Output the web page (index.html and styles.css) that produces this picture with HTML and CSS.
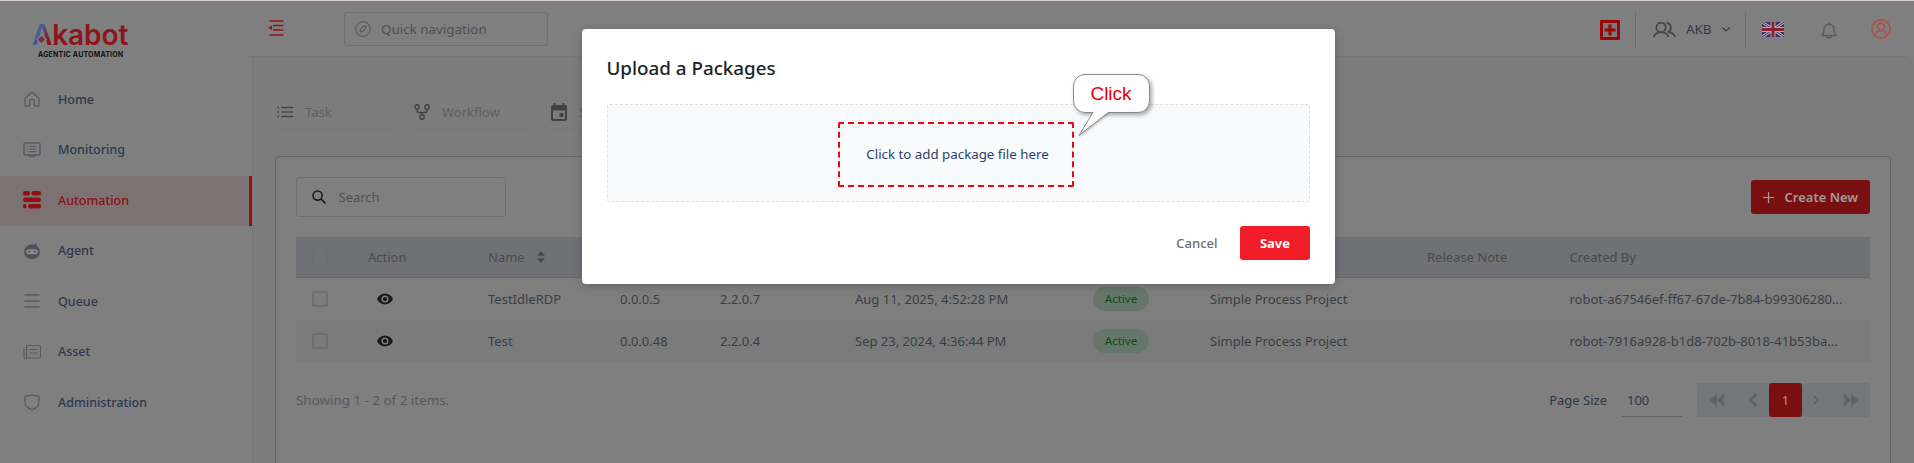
FILE: index.html
```html
<!DOCTYPE html>
<html lang="en">
<head>
<meta charset="utf-8">
<title>Packages</title>
<link rel="stylesheet" href="styles.css">
</head>
<body>
<div class="topline"></div>
<div class="app">
  <aside class="sidebar">
    <div class="brand">
      <div class="logo"><span class="logo-a">A</span>kabot</div>
      <div class="tagline">AGENTIC AUTOMATION</div>
    </div>
    <nav class="nav">
      <a class="nav-item"><svg class="nav-icon" viewBox="0 0 18 18"><path d="M2 8.200 9 2l7 6.200V16h-4.600v-4.500a2.400 2.400 0 0 0-4.800 0V16H2z" fill="none" stroke="#565c63" stroke-width="1.300" stroke-linejoin="round"/></svg><span>Home</span></a>
      <a class="nav-item"><svg class="nav-icon" viewBox="0 0 18 18"><rect x="1" y="2" width="16" height="12" rx="1.500" fill="none" stroke="#565c63" stroke-width="1.500"/><path d="M4 5.500h1M4 8h1M4 10.500h1M6.500 5.500h7M6.500 8h7M6.500 10.500h7" stroke="#565c63" stroke-width="1.100"/><path d="M6 15.500h6" stroke="#565c63" stroke-width="1.600"/></svg><span>Monitoring</span></a>
      <a class="nav-item active"><svg class="nav-icon" viewBox="0 0 18 18"><g fill="#8f0f14"><rect x="0" y="0" width="7" height="4.500" rx="2"/><rect x="8.500" y="0" width="9.500" height="4.500" rx="2"/><rect x="0" y="6.500" width="18" height="4.500" rx="2"/><rect x="0" y="13" width="3.500" height="4.500" rx="1.700"/><rect x="5" y="13" width="13" height="4.500" rx="2"/></g></svg><span>Automation</span></a>
      <a class="nav-item"><svg class="nav-icon" viewBox="0 0 18 18"><path d="M12 2.800 13.300.8l.3 3A7.500 7.500 0 0 1 16.800 10c0 4.200-3.400 7-7.800 7s-7.800-2.800-7.800-7a7.800 7.800 0 0 1 10.800-7.200z" fill="#4e5358"/><rect x="3.200" y="7.200" width="11.600" height="5" rx="2.500" fill="#8b8d90"/><circle cx="6.300" cy="9.700" r="1.100" fill="#4e5358"/><circle cx="11.700" cy="9.700" r="1.100" fill="#4e5358"/></svg><span>Agent</span></a>
      <a class="nav-item"><svg class="nav-icon" viewBox="0 0 18 18"><path d="M1.500 3h15M1.500 9h15M1.500 15h15" stroke="#565c63" stroke-width="1.300"/></svg><span>Queue</span></a>
      <a class="nav-item"><svg class="nav-icon" viewBox="0 0 18 18"><rect x="3.500" y="2.500" width="14" height="12.500" rx="1" fill="none" stroke="#565c63" stroke-width="1.200"/><path d="M6.500 6.500h8M6.500 10h8" stroke="#565c63" stroke-width="1.200"/><path d="M1 5v9.500A1 1 0 0 0 2 15.500h2" fill="none" stroke="#565c63" stroke-width="1.200"/></svg><span>Asset</span></a>
      <a class="nav-item"><svg class="nav-icon" viewBox="0 0 18 18"><path d="M2 3c2.300 0 4.500-.4 7-1.200 2.500.8 4.700 1.200 7 1.200v6.500c0 3.500-3 5.900-7 7.200-4-1.300-7-3.700-7-7.200z" fill="none" stroke="#565c63" stroke-width="1.300" stroke-linejoin="round"/></svg><span>Administration</span></a>
    </nav>
  </aside>

  <div class="main">
    <header class="topbar">
      <svg class="menu-icon" viewBox="0 0 16 16"><path d="M1.500 1h14M5 5.500h10.500M5 10h10.500M1.500 15h14" stroke="#95131a" stroke-width="1.400"/><path d="M0 7.800 4 5.600v4.400z" fill="#95131a"/></svg>
      <div class="quick-nav">
        <svg class="compass" viewBox="0 0 16 16"><circle cx="8" cy="8" r="7.400" fill="none" stroke="#4f5358" stroke-width="1"/><path d="M11.200 4.800 9.400 9.400 4.800 11.200 6.600 6.600z" fill="none" stroke="#4f5358" stroke-width="1"/></svg>
        <span>Quick navigation</span>
      </div>
      <div class="tools">
        <svg class="tool-plus" viewBox="0 0 20 20"><rect x="0" y="0" width="20" height="20" rx="1" fill="#9b0606"/><rect x="3" y="3" width="14" height="14" fill="#7a7a7a"/><path d="M10 4.500v11M4.500 10h11" stroke="#9b0606" stroke-width="3.200"/></svg>
        <span class="divider"></span>
        <svg class="tool-users" viewBox="0 0 23 15"><circle cx="8" cy="5.500" r="4.700" fill="none" stroke="#45494d" stroke-width="1.800"/><path d="M.8 15C1.500 11.800 4 10.300 8 10.300s6.500 1.500 7.200 4.700" fill="none" stroke="#45494d" stroke-width="1.800"/><path d="M13.500 1a4.700 4.700 0 0 1 1.500 9c3.300.3 6 1.600 7.200 5" fill="none" stroke="#45494d" stroke-width="1.800"/></svg>
        <span class="tool-name">AKB</span>
        <svg class="tool-chevron" viewBox="0 0 8 5"><path d="M.5.500 4 4 7.500.500" fill="none" stroke="#2f3a52" stroke-width="1.100"/></svg>
        <span class="divider second"></span>
        <svg class="tool-flag" viewBox="0 0 22 15"><rect width="22" height="15" fill="#2c3a72"/><path d="M0 0 22 15M22 0 0 15" stroke="#a9a9b2" stroke-width="3"/><path d="M0 0 22 15M22 0 0 15" stroke="#8a2030" stroke-width="1"/><path d="M11 0v15M0 7.500h22" stroke="#a9a9b2" stroke-width="5"/><path d="M11 0v15M0 7.500h22" stroke="#8a2030" stroke-width="3"/></svg>
        <svg class="tool-bell" viewBox="0 0 16 17"><path d="M1 13.500c1.300-1.300 1.800-2.600 1.800-5.200C2.800 4.600 5 2.300 8 2.300s5.200 2.300 5.200 6c0 2.600.5 3.900 1.800 5.200z" fill="none" stroke="#565c63" stroke-width="1.400" stroke-linejoin="round"/><path d="M8 .500v1.800M6 14a2 2 0 0 0 4 0" fill="none" stroke="#565c63" stroke-width="1.400"/></svg>
        <svg class="tool-avatar" viewBox="0 0 20 20"><circle cx="10" cy="10" r="9.100" fill="none" stroke="#ad5547" stroke-width="1.700"/><circle cx="10" cy="7.600" r="3.400" fill="none" stroke="#ad5547" stroke-width="1.700"/><path d="M3.800 16.500c.6-3 3-4.500 6.200-4.500s5.600 1.500 6.200 4.500" fill="none" stroke="#ad5547" stroke-width="1.700"/></svg>
      </div>
    </header>

    <section class="content">
      <div class="tabs">
        <div class="tab"><svg class="tab-icon" viewBox="0 0 16 12"><path d="M4 1.500h12M4 6h12M4 10.500h12" stroke="#45494d" stroke-width="1.700"/><path d="M0 1.500h2M0 6h2M0 10.500h2" stroke="#45494d" stroke-width="1.700"/></svg><span>Task</span></div>
        <div class="tab"><svg class="tab-icon flow" viewBox="0 0 16 16"><circle cx="3" cy="3" r="2.200" fill="none" stroke="#3f4347" stroke-width="1.400"/><circle cx="13" cy="3" r="2.200" fill="none" stroke="#3f4347" stroke-width="1.400"/><circle cx="8" cy="13" r="2.200" fill="none" stroke="#3f4347" stroke-width="1.400"/><path d="M3 5.200V6.500A2 2 0 0 0 5 8.500h6a2 2 0 0 0 2-2V5.200M8 8.500v2.300" fill="none" stroke="#3f4347" stroke-width="1.400"/></svg><span>Workflow</span></div>
        <div class="tab"><svg class="tab-icon cal" viewBox="0 0 16 18"><path d="M3.500 0v3M12.500 0v3" stroke="#3f4347" stroke-width="2"/><path d="M2 2h12a2 2 0 0 1 2 2v12a2 2 0 0 1-2 2H2a2 2 0 0 1-2-2V4a2 2 0 0 1 2-2zm0 5.500V16h12V7.500z" fill="#3f4347" fill-rule="evenodd"/><rect x="8.500" y="10" width="4" height="4" fill="#3f4347"/></svg><span>Schedule</span></div>
      </div>

      <div class="card">
        <div class="toolbar">
          <div class="search">
            <svg class="search-icon" viewBox="0 0 14 14"><circle cx="5.600" cy="5.600" r="4.600" fill="none" stroke="#16191c" stroke-width="1.500"/><path d="M9 9l4.500 4.500" stroke="#16191c" stroke-width="1.600"/></svg>
            <span>Search</span>
          </div>
          <button class="create"><svg class="create-plus" viewBox="0 0 11 11"><path d="M5.500 0v11M0 5.500h11" stroke="#a09a9a" stroke-width="1.200"/></svg><span>Create New</span></button>
        </div>

        <div class="table">
          <div class="row head">
            <div class="cell"><span class="check"></span></div>
            <div class="cell">Action</div>
            <div class="cell">Name<svg class="sort" viewBox="0 0 8 12"><path d="M4 0 8 4.800H0zM4 12 0 7.200h8z" fill="#4a4a4a"/></svg></div>
            <div class="cell">Version</div>
            <div class="cell">Core</div>
            <div class="cell">Created Date</div>
            <div class="cell">Status</div>
            <div class="cell">Type</div>
            <div class="cell">Release Note</div>
            <div class="cell">Created By</div>
          </div>
          <div class="row">
            <div class="cell"><span class="check"></span></div>
            <div class="cell"><svg class="eye" viewBox="0 0 16 12"><path d="M8 .500C4.500.500 1.500 2.600 0 6c1.500 3.400 4.500 5.500 8 5.500s6.500-2.100 8-5.500C14.500 2.600 11.500.500 8 .500z" fill="#18191a"/><circle cx="8" cy="6" r="3.600" fill="#7e7e7e"/><circle cx="8" cy="6" r="2.100" fill="#18191a"/></svg></div>
            <div class="cell">TestIdleRDP</div>
            <div class="cell">0.0.0.5</div>
            <div class="cell">2.2.0.7</div>
            <div class="cell">Aug 11, 2025, 4:52:28 PM</div>
            <div class="cell"><span class="pill">Active</span></div>
            <div class="cell">Simple Process Project</div>
            <div class="cell"></div>
            <div class="cell">robot-a67546ef-ff67-67de-7b84-b99306280...</div>
          </div>
          <div class="row even">
            <div class="cell"><span class="check"></span></div>
            <div class="cell"><svg class="eye" viewBox="0 0 16 12"><path d="M8 .500C4.500.500 1.500 2.600 0 6c1.500 3.400 4.500 5.500 8 5.500s6.500-2.100 8-5.500C14.500 2.600 11.500.500 8 .500z" fill="#18191a"/><circle cx="8" cy="6" r="3.600" fill="#7c7c7c"/><circle cx="8" cy="6" r="2.100" fill="#18191a"/></svg></div>
            <div class="cell">Test</div>
            <div class="cell">0.0.0.48</div>
            <div class="cell">2.2.0.4</div>
            <div class="cell">Sep 23, 2024, 4:36:44 PM</div>
            <div class="cell"><span class="pill">Active</span></div>
            <div class="cell">Simple Process Project</div>
            <div class="cell"></div>
            <div class="cell">robot-7916a928-b1d8-702b-8018-41b53ba...</div>
          </div>
        </div>

        <div class="footer">
          <span class="showing">Showing 1 - 2 of 2 items.</span>
          <div class="page-size"><span class="ps-label">Page Size</span><span class="ps-value">100</span></div>
          <div class="pager">
            <svg class="pg first" viewBox="0 0 14 14"><path d="M7 0v14L0 7zM14 0v14L7 7z" fill="#5f6367"/></svg>
            <svg class="pg prev" viewBox="0 0 10 14"><path d="M8.500 1 2 7l6.500 6" fill="none" stroke="#5f6367" stroke-width="2.600"/></svg>
            <span class="pg-current">1</span>
            <svg class="pg next" viewBox="0 0 7 10"><path d="M1 1l4.500 4L1 9" fill="none" stroke="#5f6367" stroke-width="1.800"/></svg>
            <svg class="pg last" viewBox="0 0 14 14"><path d="M0 0v14l7-7zM7 0v14l7-7z" fill="#5f6367"/></svg>
          </div>
        </div>
      </div>
    </section>
  </div>
</div>

<div class="modal">
  <h2 class="modal-title">Upload a Packages</h2>
  <div class="dropzone">
    <div class="drop-target">Click to add package file here</div>
  </div>
  <div class="modal-actions">
    <button class="cancel">Cancel</button>
    <button class="save">Save</button>
  </div>
</div>

<div class="callout">
  <span>Click</span>
  <svg class="callout-tail" viewBox="0 0 32 26"><path d="M15 .500 1 23.500 30 .500" fill="#fff" stroke="#8a8a8a" stroke-width="1"/><path d="M15.500 0h14v1.200h-14z" fill="#fff"/></svg>
</div>
```

FILE: styles.css
```css
* { box-sizing: border-box; }
html, body { margin: 0; height: 100%; }
body {
  position: relative;
  height: 463px;
  overflow: hidden;
  background: #7f7f7f;
  color: #3a3e44;
  font-family: "Noto Sans", "Liberation Sans", sans-serif;
  font-size: 13px;
}
.topline {
  position: absolute;
  top: 0; left: 0; right: 0;
  height: 1px;
  background: #dccfcf;
}
.app { display: flex; height: 463px; }

/* sidebar */
.sidebar { width: 252px; flex: none; }
.brand { height: 74.500px; padding: 19px 0 0 32px; }
.logo {
  font-family: "Inter", sans-serif;
  font-size: 28px;
  font-weight: 600;
  line-height: 32px;
  letter-spacing: -.1px;
  color: #8f141a;
}
.logo-a {
  position: relative;
  display: inline-block;
  background: linear-gradient(100deg, #2d4f98 0%, #4a5d9a 45%, #8f141a 78%);
  -webkit-background-clip: text;
  background-clip: text;
  color: transparent;
}
.logo-a::after {
  content: "";
  position: absolute;
  left: 7px;
  top: 18px;
  width: 5px;
  height: 5px;
  background: #7a2a50;
  box-shadow: 0 0 0 1.500px #7f7f7f;
  transform: rotate(45deg);
}
.tagline {
  font-family: "Inter", sans-serif;
  font-size: 7px;
  font-weight: 700;
  line-height: 8px;
  margin: 0 0 0 6px;
  letter-spacing: .2px;
  color: #111;
  white-space: nowrap;
}
.nav-item {
  display: flex;
  align-items: center;
  height: 50.500px;
  padding: 0 0 1px 22.500px;
  font-size: 12.500px;
  font-weight: 500;
  color: #2c3850;
}
.nav-icon { width: 18px; height: 18px; margin-right: 17.500px; flex: none; }
.nav-item.active {
  background: #7c7272;
  border-right: 3px solid #94101a;
  color: #8c1016;
}

/* top bar */
.main { flex: 1; min-width: 0; }
.topbar {
  display: flex;
  align-items: center;
  height: 57px;
  margin: 0 6px 0 -4px;
  padding: 0 17px 0 19.500px;
  border-bottom: 1px solid #777;
}
.menu-icon { width: 16px; height: 16px; flex: none; margin-top: -1px; }
.quick-nav {
  display: flex;
  align-items: center;
  width: 204px;
  height: 34px;
  margin: 1px 0 0 60.500px;
  padding-left: 10px;
  border: 1px solid #6f6f6f;
  border-radius: 3px;
  color: #4c5258;
  font-size: 13.400px;
}
.compass { width: 16px; height: 16px; margin-right: 10px; }
.tools { display: flex; align-items: center; margin-left: auto; }
.tool-plus { width: 20px; height: 20px; margin-top: 3px; }
.divider { width: 1px; height: 38px; margin: 4px 0 0 15px; background: #6e6e6e; }
.tool-users { width: 23px; height: 15px; margin: 2px 0 0 17px; }
.tool-name { margin-left: 10px; color: #2f3a52; margin-top: 2px; width: 25px; font-size: 13.400px; }
.tool-chevron { width: 8px; height: 5px; margin: 3px 0 0 10.500px; }
.divider.second { margin-left: 15.500px; }
.tool-flag { width: 22px; height: 15px; margin: 2px 0 0 16px; }
.tool-bell { width: 16px; height: 17px; margin: 4px 0 0 37px; }
.tool-avatar { width: 20px; height: 20px; margin: 2px 0 0 34px; }

/* content */
.content {
  height: 406px;
  padding: 38px 23px 0 23px;
  border-left: 1px solid #767676;
  background: #7c7c7c;
}
.tabs { display: flex; gap: 17px; margin-left: -1px; }
.tab {
  display: flex;
  align-items: center;
  width: 120px;
  height: 35px;
  padding-left: 2px;
  border-bottom: 1px solid #787878;
  color: #5b6067;
}
.tab-icon { width: 16px; height: 12px; margin-right: 12px; flex: none; }
.tab-icon.flow { height: 16px; }
.tab-icon.cal { height: 18px; }

.card {
  height: 320px;
  margin-top: 26px;
  margin-left: -1px;
  padding: 20px;
  background: #7f7f7f;
  border: 1px solid #666;
  border-radius: 4px;
}
.toolbar { display: flex; align-items: center; justify-content: space-between; height: 40px; }
.search {
  display: flex;
  align-items: center;
  width: 210px;
  height: 40px;
  padding-left: 15px;
  border: 1px solid #6e6e6e;
  border-radius: 3px;
  color: #4c5258;
}
.search-icon { width: 14px; height: 14px; margin-right: 12.500px; }
.create {
  display: flex;
  align-items: center;
  width: 119px;
  height: 34px;
  padding: 0 0 0 12px;
  border: 0;
  border-radius: 3px;
  background: #7a0f12;
  color: #a09a9a;
  font: 600 13px "Noto Sans", sans-serif;
}
.create-plus { width: 11px; height: 11px; margin-right: 10.500px; }

.table { margin-top: 20px; }
.row {
  display: grid;
  grid-template-columns: 72px 120px 132px 100px 135px 238px 117px 217px 142.500px 1fr;
  align-items: center;
  height: 42px;
  background: #7e7e7e;
}
.row.even { background: #7b7b7b; }
.row.head {
  height: 40.500px;
  background: #6f7174;
  border-bottom: 1px solid #65686c;
  color: #4a4a4a;
}
.cell { display: flex; align-items: center; white-space: nowrap; overflow: hidden; }
.check {
  width: 16px;
  height: 16px;
  margin-left: 16px;
  border: 2px solid #6b6e72;
  border-radius: 2px;
}
.sort { width: 8px; height: 12px; margin-left: 12px; }
.eye { width: 16px; height: 12px; margin-left: 8.500px; }
.pill {
  display: flex;
  align-items: center;
  justify-content: center;
  width: 56px;
  height: 24px;
  border-radius: 12px;
  background: #66766a;
  color: #0f4a20;
  font-size: 11.500px;
}

.footer { display: flex; align-items: center; height: 34px; margin-top: 21px; }
.showing { color: #565a60; font-size: 13.400px; }
.page-size { display: flex; align-items: center; margin-left: auto; color: #2c3648; }
.ps-value {
  width: 60px;
  height: 34px;
  margin: 0 15px;
  padding: 8px 0 0 5px;
  border-bottom: 1px solid #666;
}
.pager {
  display: flex;
  align-items: center;
  width: 173px;
  height: 34px;
  border-radius: 3px;
  background: #74767a;
}
.pg { flex: none; }
.pg.first { width: 14px; height: 14px; margin-left: 13px; }
.pg.prev { width: 10px; height: 14px; margin-left: 24px; }
.pg-current {
  display: flex;
  align-items: center;
  justify-content: center;
  width: 33px;
  height: 34px;
  margin-left: 11px;
  border-radius: 3px;
  background: #7a0f12;
  color: #a09a9a;
}
.pg.next { width: 7px; height: 10px; margin-left: 11px; }
.pg.last { width: 14px; height: 14px; margin-left: 23.500px; }

/* modal */
.modal {
  position: absolute;
  left: 582px;
  top: 29px;
  width: 752.500px;
  height: 255px;
  padding: 0 24.500px;
  background: #fff;
  border-radius: 4px;
  box-shadow: 0 2px 10px rgba(0,0,0,.2);
}
.modal-title {
  height: 75px;
  margin: 0;
  padding-top: 25px;
  font-size: 18.800px;
  line-height: 28px;
  font-weight: 500;
  color: #212529;
}
.dropzone {
  display: flex;
  align-items: center;
  justify-content: center;
  width: 703px;
  height: 98px;
  padding: 2px 5px 0 0;
  background: #f9fafc;
  border: 1px dashed #dde0e6;
  border-radius: 3px;
}
.drop-target {
  display: flex;
  align-items: center;
  justify-content: center;
  width: 236px;
  height: 65px;
  padding-left: 4px;
  border: 2px dashed #f5000f;
  border-radius: 2px;
  color: #2f3f6b;
  font-size: 13.300px;
}
.modal-actions {
  display: flex;
  align-items: center;
  justify-content: flex-end;
  margin-top: 24px;
}
.cancel {
  padding: 0;
  border: 0;
  background: none;
  color: #6c7178;
  font: 500 13px "Noto Sans", sans-serif;
}
.save {
  width: 70px;
  height: 34px;
  margin-left: 22.500px;
  border: 0;
  border-radius: 3px;
  background: #f01c28;
  color: #fff;
  font: 700 13px "Noto Sans", sans-serif;
}

/* annotation bubble */
.callout {
  position: absolute;
  left: 1072.500px;
  top: 74px;
  display: flex;
  align-items: center;
  justify-content: center;
  width: 77px;
  height: 39px;
  background: #fff;
  border: 1px solid #8a8a8a;
  border-radius: 12px;
  box-shadow: 2px 2px 4px rgba(0,0,0,.35);
  color: #f00000;
  font: 19px "Liberation Sans", Arial, sans-serif;
}
.callout-tail {
  position: absolute;
  left: 4px;
  top: 37px;
  width: 32px;
  height: 26px;
  filter: drop-shadow(1px 1px 1px rgba(0,0,0,.25));
}
```
